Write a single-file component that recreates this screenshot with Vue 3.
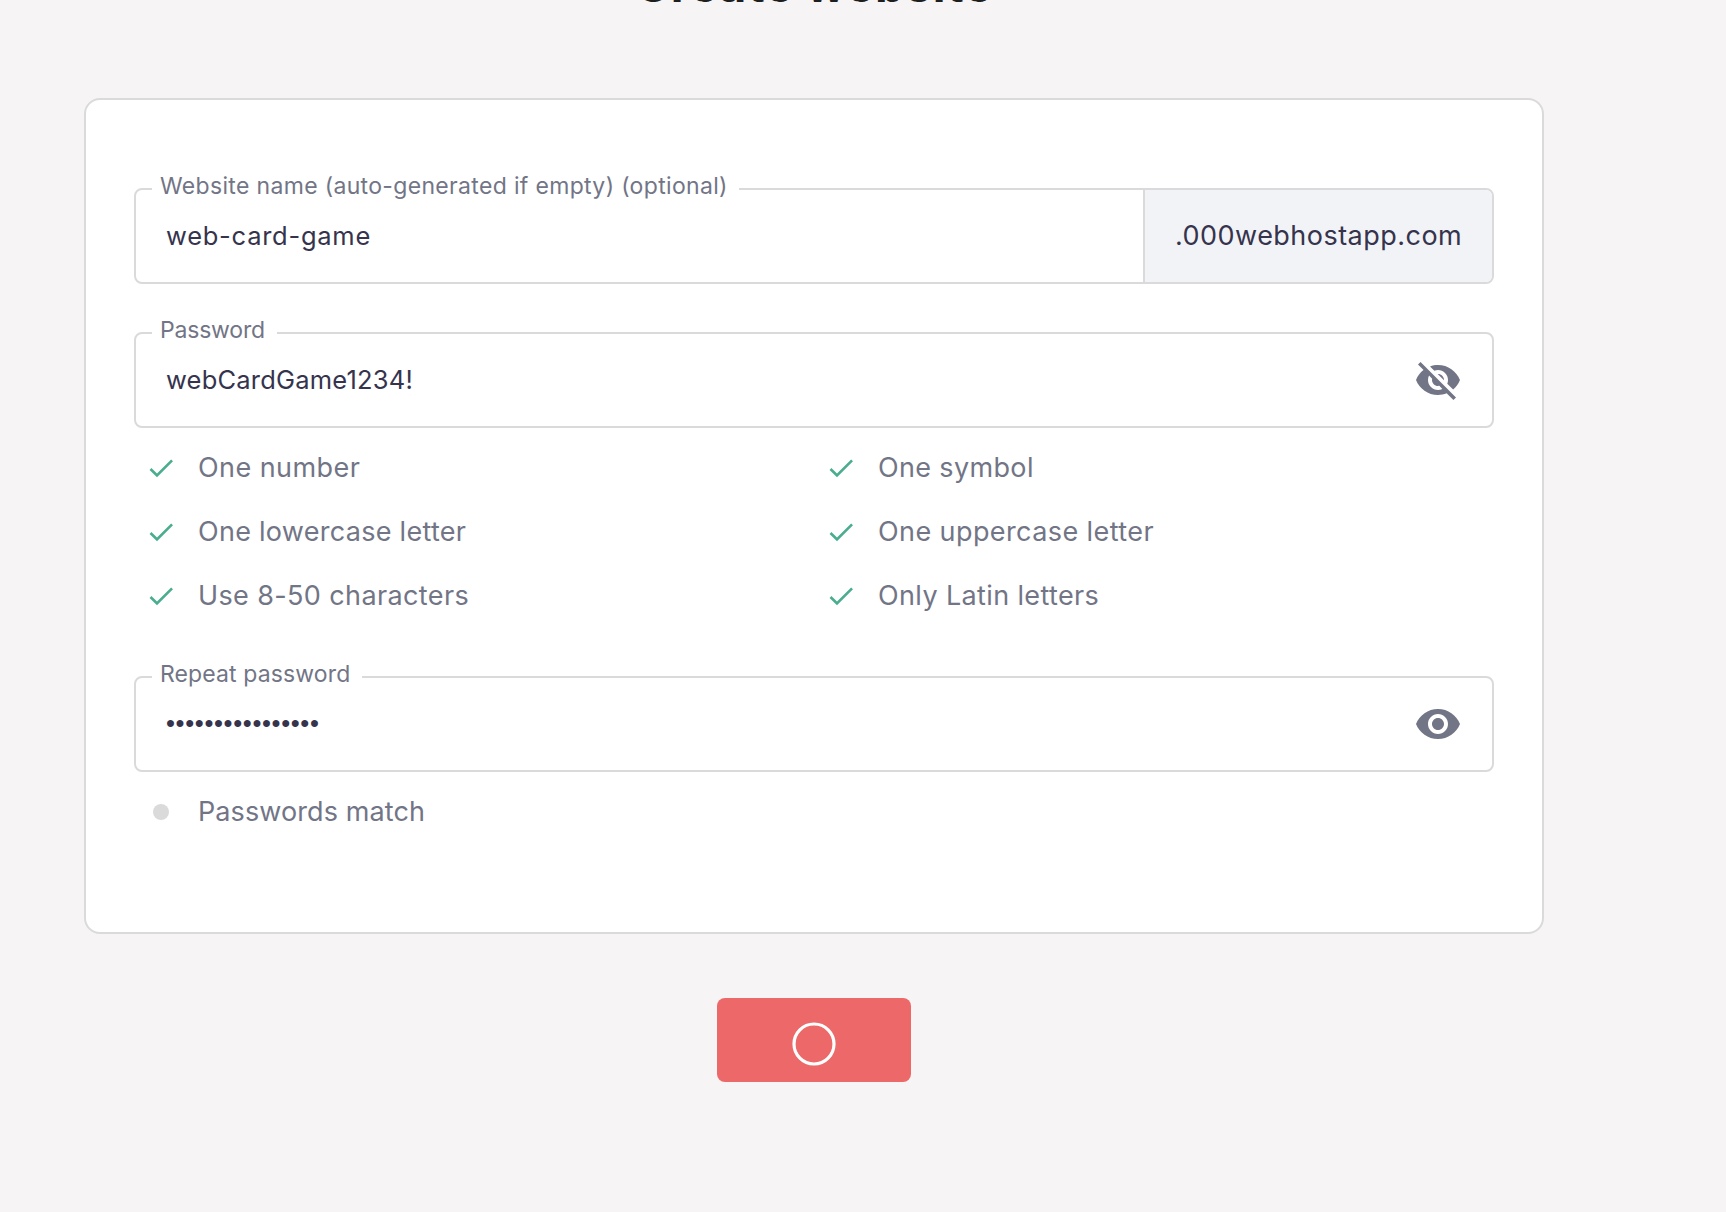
<script setup>
const rules = [
  { text: 'One number', spacing: 0.43 },
  { text: 'One symbol', spacing: 0.35 },
  { text: 'One lowercase letter', spacing: 0.28 },
  { text: 'One uppercase letter', spacing: 0.41 },
  { text: 'Use 8-50 characters', spacing: 0.38 },
  { text: 'Only Latin letters', spacing: 0.37 },
]
const dots = '•'.repeat(16)
</script>

<template>
  <main class="page">
    <h1 class="title">Create website</h1>

    <section class="card">
      <div class="field">
        <label class="label label-name">Website name (auto-generated if empty) (optional)</label>
        <span class="value value-name">web-card-game</span>
        <span class="suffix">.000webhostapp.com</span>
      </div>

      <div class="field field-password">
        <label class="label label-password">Password</label>
        <span class="value">webCardGame1234!</span>
        <svg class="eye" viewBox="0 0 24 24" aria-hidden="true">
          <path d="M12 7c2.76 0 5 2.24 5 5 0 .65-.13 1.26-.36 1.83l2.92 2.92c1.51-1.26 2.7-2.89 3.43-4.75-1.73-4.39-6-7.5-11-7.5-1.4 0-2.74.25-3.98.7l2.16 2.16C10.74 7.13 11.35 7 12 7zM2 4.27l2.28 2.28.46.46C3.08 8.3 1.78 10.02 1 12c1.73 4.39 6 7.5 11 7.5 1.55 0 3.03-.3 4.38-.84l.42.42L19.73 22 21 20.73 3.27 3 2 4.27zM7.53 9.8l1.55 1.55c-.05.21-.08.43-.08.65 0 1.66 1.34 3 3 3 .22 0 .44-.03.65-.08l1.55 1.55c-.67.33-1.41.53-2.2.53-2.76 0-5-2.24-5-5 0-.79.2-1.53.53-2.2zm4.31-.78l3.15 3.15.02-.16c0-1.66-1.34-3-3-3l-.17.01z" />
        </svg>
      </div>

      <ul class="rules">
        <li v-for="rule in rules" :key="rule.text" class="rule">
          <svg class="check" viewBox="0 0 24 24" aria-hidden="true">
            <path d="M9 16.17 4.83 12l-1.42 1.41L9 19 21 7l-1.41-1.41z" />
          </svg>
          <span class="rule-text" :style="{ letterSpacing: rule.spacing + 'px' }">{{ rule.text }}</span>
        </li>
      </ul>

      <div class="field field-repeat">
        <label class="label label-repeat">Repeat password</label>
        <span class="value masked">{{ dots }}</span>
        <svg class="eye" viewBox="0 0 24 24" aria-hidden="true">
          <path d="M12 4.5C7 4.5 2.73 7.61 1 12c1.73 4.39 6 7.5 11 7.5s9.27-3.11 11-7.5c-1.73-4.39-6-7.5-11-7.5zM12 17c-2.76 0-5-2.24-5-5s2.24-5 5-5 5 2.24 5 5-2.24 5-5 5zm0-8c-1.66 0-3 1.34-3 3s1.34 3 3 3 3-1.34 3-3-1.34-3-3-3z" />
        </svg>
      </div>

      <div class="rule match">
        <span class="bullet"></span>
        <span class="rule-text match-text">Passwords match</span>
      </div>
    </section>

    <button class="submit" type="button" aria-label="Create">
      <svg class="spinner" viewBox="0 0 44 44" aria-hidden="true">
        <circle cx="22" cy="22" r="20" />
      </svg>
    </button>
  </main>
</template>

<style>
body {
  margin: 0;
  background: #f6f4f5;
}
</style>

<style scoped>
.page {
  box-sizing: border-box;
  display: flex;
  flex-direction: column;
  align-items: center;
  width: 1726px;
  height: 1212px;
  padding-right: 100px;
  overflow: hidden;
  background: #f6f4f5;
  color: #36344d;
  font-family: Inter, sans-serif;
}

.title {
  flex: none;
  margin: -43px 0 85px 2px;
  color: #1d1e20;
  font-size: 47px;
  font-weight: 700;
  line-height: 56px;
  letter-spacing: 0.9px;
  white-space: nowrap;
}

.card {
  box-sizing: border-box;
  flex: none;
  width: 1460px;
  height: 836px;
  margin-left: 2px;
  padding: 88px 48px 0;
  border: 2px solid #dadada;
  border-radius: 16px;
  background: #fff;
}

.field {
  position: relative;
  box-sizing: border-box;
  display: flex;
  align-items: center;
  justify-content: space-between;
  height: 96px;
  padding-left: 30px;
  border: 2px solid #dadada;
  border-radius: 8px;
}

.field-password {
  margin-top: 48px;
}

.field-repeat {
  margin-top: 49px;
}

.label {
  position: absolute;
  top: -16px;
  left: 16px;
  box-sizing: border-box;
  padding-left: 8px;
  background: #fff;
  color: #727586;
  font-size: 23px;
  line-height: 24px;
  white-space: nowrap;
}

.label-name {
  width: 587px;
  letter-spacing: 0.33px;
}

.label-password {
  width: 125px;
  letter-spacing: -0.2px;
}

.label-repeat {
  width: 210px;
  letter-spacing: 0.12px;
}

.value {
  font-size: 25.5px;
  line-height: 32px;
  letter-spacing: 0.2px;
}

.value-name {
  letter-spacing: 0.74px;
}

.masked {
  padding-bottom: 2px;
  font-family: "Liberation Sans", sans-serif;
  letter-spacing: 0.67px;
}

.suffix {
  box-sizing: border-box;
  align-self: stretch;
  width: 349px;
  padding-left: 30px;
  border-left: 2px solid #dadada;
  border-radius: 0 6px 6px 0;
  background: #f2f3f6;
  font-size: 27px;
  line-height: 92px;
  letter-spacing: 0.47px;
  white-space: nowrap;
}

.eye {
  width: 48px;
  height: 48px;
  margin-right: 30px;
  fill: #727586;
}

.rules {
  display: grid;
  grid-template-columns: 1fr 1fr;
  margin: 7px 0 0;
  padding: 0;
  list-style: none;
}

.rule {
  display: flex;
  align-items: center;
  gap: 21px;
  height: 64px;
  padding-left: 11px;
  color: #727586;
  font-size: 27px;
  line-height: 32px;
  white-space: nowrap;
}

.rule-text {
  padding-top: 2px;
}

.check {
  width: 32px;
  height: 32px;
  padding-top: 2px;
  fill: #4bad90;
}

.match {
  margin-top: 7px;
}

.bullet {
  width: 16px;
  height: 16px;
  margin: 2px 8px 0 8px;
  border-radius: 50%;
  background: #dadada;
}

.match-text {
  letter-spacing: 0.1px;
}

.submit {
  display: flex;
  flex: none;
  align-items: center;
  justify-content: center;
  width: 194px;
  height: 84px;
  margin: 64px 0 0 2px;
  padding: 7px 0 0;
  border: 0;
  border-radius: 8px;
  background: #ed6868;
}

.spinner {
  width: 44px;
  height: 44px;
  fill: none;
  stroke: #fff;
  stroke-width: 3.2;
}
</style>
